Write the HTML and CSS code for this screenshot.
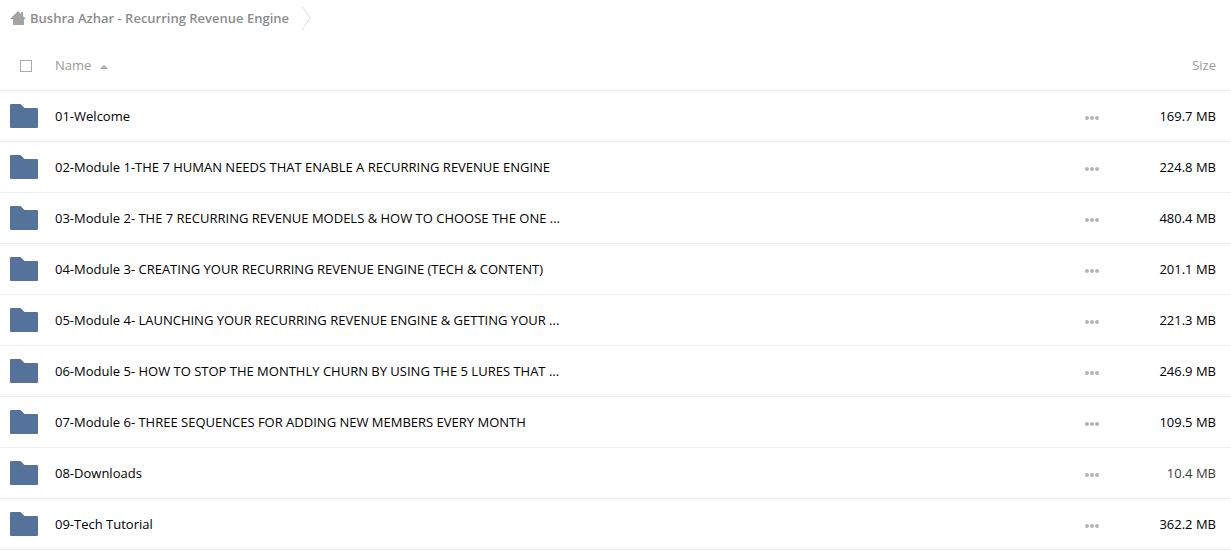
FILE: index.html
```
<!DOCTYPE html>
<html lang="en">
<head>
  <meta charset="UTF-8">
  <title>Bushra Azhar - Recurring Revenue Engine</title>
  <link rel="stylesheet" href="styles.css">
</head>

<body>

  <svg class="sprites" width="0" height="0" aria-hidden="true">
    <symbol id="folder" viewBox="0 0 28 24">
      <path d="M1 0h9.500l4 4H27a1 1 0 0 1 1 1v18a1 1 0 0 1-1 1H1a1 1 0 0 1-1-1V1a1 1 0 0 1 1-1z"/>
    </symbol>
    <symbol id="dots" viewBox="0 0 14 4">
      <circle cx="2" cy="2" r="2"/>
      <circle cx="7" cy="2" r="2"/>
      <circle cx="12" cy="2" r="2"/>
    </symbol>
  </svg>

  <nav class="breadcrumb">
    <a href="#" class="crumb">
      <svg class="home-icon" width="16" height="14" viewBox="0 0 16 14" aria-hidden="true">
        <path d="M8 0l3 3V1h2v4l3 3h-2v6H3V8H0z"/>
      </svg>
      Bushra Azhar - Recurring Revenue Engine
    </a>
    <svg class="crumb-arrow" width="10" height="26" viewBox="0 0 10 26" aria-hidden="true">
      <path d="M1 1l8 12-8 12"/>
    </svg>
  </nav>

  <table class="files">
    <thead>
      <tr>
        <th class="col-icon"><input type="checkbox" class="select-all" aria-label="Select all"></th>
        <th class="col-name"><a href="#" class="sort">Name<span class="sort-arrow"></span></a></th>
        <th class="col-actions"></th>
        <th class="col-size"><a href="#" class="sort">Size</a></th>
      </tr>
    </thead>
    <tbody id="fileList"></tbody>
  </table>

  <script src="files.js"></script>

</body>
</html>
```
FILE: styles.css
```
body {
  margin: 0;
  background: #fff;
  color: #000;
  font-family: "Open Sans", sans-serif;
  font-size: 13px;
  line-height: 20px;
}

a {
  color: inherit;
  text-decoration: none;
}

.sprites {
  position: absolute;
}

.breadcrumb {
  display: flex;
  align-items: center;
  gap: 12px;
  height: 36px;
  padding-left: 10px;
  margin-bottom: 4px;
}

.crumb {
  display: flex;
  align-items: center;
  gap: 4px;
  color: #8c8c8c;
  font-weight: 600;
}

.home-icon {
  fill: #a3a3a3;
}

.crumb-arrow {
  fill: none;
  stroke: #ddd;
}

/* File list */
.files {
  width: 100%;
  table-layout: fixed;
  border-collapse: separate;
  border-spacing: 0;
}

.files th,
.files td {
  box-sizing: border-box;
  height: 51px;
  padding: 0;
  border-bottom: 1px solid #eee;
  text-align: left;
  vertical-align: middle;
  font-weight: 400;
}

.files th {
  color: #999;
}

.files .col-icon {
  width: 55px;
}

.files .col-actions {
  width: 60px;
  text-align: center;
}

.files .col-size {
  width: 109px;
  padding-right: 15px;
  text-align: right;
}

.files .small {
  color: #3b3b3b;
}

.select-all {
  display: block;
  appearance: none;
  width: 12px;
  height: 12px;
  margin: 2px 0 0 20px;
  border: 1px solid #aaa;
  background: #fff;
}

.sort-arrow {
  display: inline-block;
  margin-left: 9px;
  border: 4px solid transparent;
  border-top: 0;
  border-bottom-color: #aaa;
  vertical-align: middle;
}

.folder-icon {
  display: block;
  margin-left: 10px;
  fill: #54729a;
}

.file-name {
  display: block;
  max-width: 600px;
  overflow: hidden;
  white-space: nowrap;
  text-overflow: ellipsis;
}

.menu-button {
  display: block;
  margin: 4px auto 0;
  padding: 4px;
  border: 0;
  background: none;
  cursor: pointer;
}

.menu-button svg {
  display: block;
  fill: #b3b3b3;
}
```
FILE: files.js
```
const files = [
  { name: "01-Welcome", size: "169.7 MB" },
  { name: "02-Module 1-THE 7 HUMAN NEEDS THAT ENABLE A RECURRING REVENUE ENGINE", size: "224.8 MB" },
  { name: "03-Module 2- THE 7 RECURRING REVENUE MODELS & HOW TO CHOOSE THE ONE ...", size: "480.4 MB" },
  { name: "04-Module 3- CREATING YOUR RECURRING REVENUE ENGINE (TECH & CONTENT)", size: "201.1 MB" },
  { name: "05-Module 4- LAUNCHING YOUR RECURRING REVENUE ENGINE & GETTING YOUR ...", size: "221.3 MB" },
  { name: "06-Module 5- HOW TO STOP THE MONTHLY CHURN BY USING THE 5 LURES THAT ...", size: "246.9 MB" },
  { name: "07-Module 6- THREE SEQUENCES FOR ADDING NEW MEMBERS EVERY MONTH", size: "109.5 MB" },
  { name: "08-Downloads", size: "10.4 MB", small: true },
  { name: "09-Tech Tutorial", size: "362.2 MB" }
];

const fileList = document.getElementById('fileList');

files.forEach(file => {
  const row = document.createElement('tr');
  row.innerHTML = `
    <td class="col-icon"><svg class="folder-icon" width="28" height="24" aria-hidden="true"><use href="#folder"/></svg></td>
    <td class="col-name"><a href="#" class="file-name"></a></td>
    <td class="col-actions">
      <button type="button" class="menu-button" aria-label="Actions"><svg width="14" height="4"><use href="#dots"/></svg></button>
    </td>
    <td class="col-size"></td>`;
  row.querySelector('.file-name').textContent = file.name;
  const size = row.querySelector('.col-size');
  size.textContent = file.size;
  if (file.small) {
    size.classList.add('small');
  }
  fileList.appendChild(row);
});
```
